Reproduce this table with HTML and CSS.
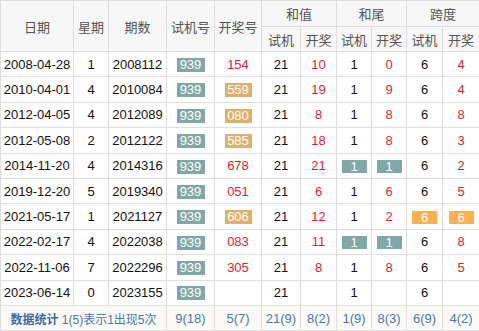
FILE: index.html
```html
<!DOCTYPE html>
<html>
<head>
<meta charset="utf-8">
<link rel="stylesheet" href="styles.css">
</head>
<body>
<table class="tbl">
<colgroup>
<col class="c-date"><col class="c-week"><col class="c-qs"><col class="c-sj"><col class="c-kj">
<col class="c-a"><col class="c-b"><col class="c-c"><col class="c-d"><col class="c-e"><col class="c-f">
</colgroup>
<thead>
<tr class="h1">
<th rowspan="2">日期</th><th rowspan="2">星期</th><th rowspan="2">期数</th><th rowspan="2">试机号</th><th rowspan="2">开奖号</th>
<th colspan="2">和值</th><th colspan="2">和尾</th><th colspan="2">跨度</th>
</tr>
<tr class="h2">
<th>试机</th><th>开奖</th><th>试机</th><th>开奖</th><th>试机</th><th>开奖</th>
</tr>
</thead>
<tbody>
<tr><td>2008-04-28</td><td>1</td><td>2008112</td><td><span class="b b-sj">939</span></td><td class="r">154</td><td>21</td><td class="r">10</td><td>1</td><td class="r">0</td><td>6</td><td class="r">4</td></tr>
<tr><td>2010-04-01</td><td>4</td><td>2010084</td><td><span class="b b-sj">939</span></td><td><span class="b b-kj">559</span></td><td>21</td><td class="r">19</td><td>1</td><td class="r">9</td><td>6</td><td class="r">4</td></tr>
<tr><td>2012-04-05</td><td>4</td><td>2012089</td><td><span class="b b-sj">939</span></td><td><span class="b b-kj">080</span></td><td>21</td><td class="r">8</td><td>1</td><td class="r">8</td><td>6</td><td class="r">8</td></tr>
<tr><td>2012-05-08</td><td>2</td><td>2012122</td><td><span class="b b-sj">939</span></td><td><span class="b b-kj">585</span></td><td>21</td><td class="r">18</td><td>1</td><td class="r">8</td><td>6</td><td class="r">3</td></tr>
<tr><td>2014-11-20</td><td>4</td><td>2014316</td><td><span class="b b-sj">939</span></td><td class="r">678</td><td>21</td><td class="r">21</td><td><span class="b b-hit">1</span></td><td><span class="b b-hit">1</span></td><td>6</td><td class="r">2</td></tr>
<tr><td>2019-12-20</td><td>5</td><td>2019340</td><td><span class="b b-sj">939</span></td><td class="r">051</td><td>21</td><td class="r">6</td><td>1</td><td class="r">6</td><td>6</td><td class="r">5</td></tr>
<tr><td>2021-05-17</td><td>1</td><td>2021127</td><td><span class="b b-sj">939</span></td><td><span class="b b-kj">606</span></td><td>21</td><td class="r">12</td><td>1</td><td class="r">2</td><td><span class="b b-or">6</span></td><td><span class="b b-or">6</span></td></tr>
<tr><td>2022-02-17</td><td>4</td><td>2022038</td><td><span class="b b-sj">939</span></td><td class="r">083</td><td>21</td><td class="r">11</td><td><span class="b b-hit">1</span></td><td><span class="b b-hit">1</span></td><td>6</td><td class="r">8</td></tr>
<tr><td>2022-11-06</td><td>7</td><td>2022296</td><td><span class="b b-sj">939</span></td><td class="r">305</td><td>21</td><td class="r">8</td><td>1</td><td class="r">8</td><td>6</td><td class="r">5</td></tr>
<tr><td>2023-06-14</td><td>0</td><td>2023155</td><td><span class="b b-sj">939</span></td><td></td><td>21</td><td></td><td>1</td><td></td><td>6</td><td></td></tr>
</tbody>
<tfoot>
<tr><td colspan="3" class="f-label"><b>数据统计</b> 1(5)表示1出现5次</td><td>9(18)</td><td>5(7)</td><td>21(9)</td><td>8(2)</td><td>1(9)</td><td>8(3)</td><td>6(9)</td><td>4(2)</td></tr>
</tfoot>
</table>
</body>
</html>
```
FILE: styles.css
```css
html, body { margin: 0; padding: 0; background: #fff; }
.tbl {
  border-collapse: collapse;
  table-layout: fixed;
  width: 479px;
  font-family: "Liberation Sans", "Noto Sans CJK SC", sans-serif;
  font-size: 13px;
  color: #111;
}
.c-date { width: 73px; }
.c-week { width: 35px; }
.c-qs { width: 58px; }
.c-sj { width: 48px; }
.c-kj { width: 47px; }
.c-a { width: 39px; }
.c-b { width: 36px; }
.c-c { width: 35px; }
.c-d { width: 35px; }
.c-e { width: 36px; }
.c-f { width: 37px; }
.tbl th, .tbl td {
  border: 1px solid #dedede;
  text-align: center;
  padding: 0;
  white-space: nowrap;
  overflow: hidden;
}
.tbl th {
  background: #f7f7f7;
  font-weight: normal;
  color: #555;
  font-family: "Noto Sans CJK SC", sans-serif;
  font-size: 13px;
}
.h1 th { height: 25px; }
.h2 th { height: 24px; }
.tbl tbody td { height: 24.4px; }
.r { color: #dc1f30; }
.b {
  display: inline-block;
  color: #fff;
  line-height: 14px;
  height: 14px;
  vertical-align: middle;
}
.b-sj { background: #7fa8a7; width: 28px; }
.b-kj { background: #dfb06b; width: 27px; }
.b-hit { background: #7fa8a7; width: 25px; height: 13px; line-height: 13px; }
.b-or { background: #ffb04f; width: 25px; height: 13px; line-height: 13px; }
.tbl tfoot td {
  background: #fbfaf6;
  color: #4a78b0;
  height: 24.4px;
}
.f-label {
  font-size: 12px;
  color: #3f6fae;
}
.f-label b { font-weight: bold; color: #3a69a8; }
```
